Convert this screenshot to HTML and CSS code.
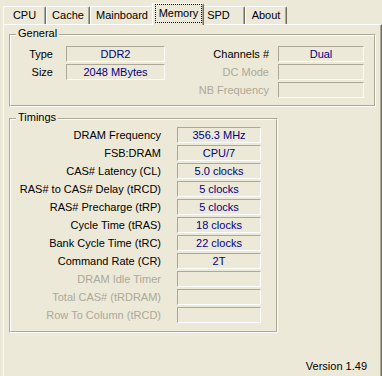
FILE: index.html
```html
<!DOCTYPE html>
<html lang="en">
<head>
    <meta charset="UTF-8">
    <title>CPU-Z Memory</title>
    <link rel="stylesheet" href="styles.css">
</head>
<body>
    <div class="tabs">
        <div class="tab tab-cpu">CPU</div>
        <div class="tab tab-cache">Cache</div>
        <div class="tab tab-mainboard">Mainboard</div>
        <div class="tab tab-memory active"><span class="focus">Memory</span></div>
        <div class="tab tab-spd">SPD</div>
        <div class="tab tab-about">About</div>
    </div>

    <div class="panel">
        <div class="group group-general">
            <div class="group-inner">
                <span class="group-title">General</span>
                <div class="general-cols">
                    <div class="col col-left">
                        <div class="field">
                            <span class="label">Type</span>
                            <span class="value">DDR2</span>
                        </div>
                        <div class="field">
                            <span class="label">Size</span>
                            <span class="value">2048 MBytes</span>
                        </div>
                    </div>
                    <div class="col col-right">
                        <div class="field">
                            <span class="label">Channels #</span>
                            <span class="value">Dual</span>
                        </div>
                        <div class="field">
                            <span class="label disabled">DC Mode</span>
                            <span class="value"></span>
                        </div>
                        <div class="field">
                            <span class="label disabled">NB Frequency</span>
                            <span class="value"></span>
                        </div>
                    </div>
                </div>
            </div>
        </div>

        <div class="group group-timings">
            <div class="group-inner">
                <span class="group-title">Timings</span>
                <div class="field">
                    <span class="label">DRAM Frequency</span>
                    <span class="value">356.3 MHz</span>
                </div>
                <div class="field">
                    <span class="label">FSB:DRAM</span>
                    <span class="value">CPU/7</span>
                </div>
                <div class="field">
                    <span class="label">CAS# Latency (CL)</span>
                    <span class="value">5.0 clocks</span>
                </div>
                <div class="field">
                    <span class="label">RAS# to CAS# Delay (tRCD)</span>
                    <span class="value">5 clocks</span>
                </div>
                <div class="field">
                    <span class="label">RAS# Precharge (tRP)</span>
                    <span class="value">5 clocks</span>
                </div>
                <div class="field">
                    <span class="label">Cycle Time (tRAS)</span>
                    <span class="value">18 clocks</span>
                </div>
                <div class="field">
                    <span class="label">Bank Cycle Time (tRC)</span>
                    <span class="value">22 clocks</span>
                </div>
                <div class="field">
                    <span class="label">Command Rate (CR)</span>
                    <span class="value">2T</span>
                </div>
                <div class="field">
                    <span class="label disabled">DRAM Idle Timer</span>
                    <span class="value"></span>
                </div>
                <div class="field">
                    <span class="label disabled">Total CAS# (tRDRAM)</span>
                    <span class="value"></span>
                </div>
                <div class="field">
                    <span class="label disabled">Row To Column (tRCD)</span>
                    <span class="value"></span>
                </div>
            </div>
        </div>

        <div class="version">Version 1.49</div>
    </div>
</body>
</html>
```

FILE: styles.css
```css
* {
    margin: 0;
    padding: 0;
    box-sizing: border-box;
}

body {
    width: 382px;
    height: 376px;
    overflow: hidden;
    background: #ece9d8;
    color: #000;
    font-family: 'Liberation Sans', Arial, sans-serif;
    font-size: 11px;
}

/* tab strip */
.tabs {
    display: flex;
    align-items: flex-end;
    height: 24px;
    padding-left: 3px;
}

.tab {
    height: 18px;
    border: 1px solid #fff;
    border-bottom: none;
    border-right-color: #716f64;
    border-radius: 2px 2px 0 0;
    box-shadow: inset -1px 0 #aca899;
    background: #ece9d8;
    text-align: center;
    line-height: 16px;
    white-space: nowrap;
}

.tab-cpu { width: 43px; }
.tab-cache { width: 44px; }
.tab-mainboard { width: 64px; }
.tab-memory { width: 48px; }
.tab-spd { width: 43px; padding-right: 10px; }
.tab-about { width: 42px; }

.tab.active {
    position: relative;
    z-index: 1;
    width: 52px;
    height: 22px;
    margin: 0 -2px -1px;
}

.tab.active .focus {
    display: block;
    height: 19px;
    margin: 0 1px 0 2px;
    border: 1px dotted #000;
    line-height: 17px;
}

/* page */
.panel {
    width: 379px;
    height: 370px;
    margin-left: 3px;
    padding-left: 5px;
    border-left: 1px solid #fff;
    border-top: 1px solid #fff;
    border-right: 1px solid #716f64;
    box-shadow: inset -1px 0 #aca899;
}

/* etched group boxes */
.group {
    border: 1px solid;
    border-color: #aca899 #fff #fff #aca899;
}

.group-inner {
    position: relative;
    border: 1px solid;
    border-color: #fff #aca899 #aca899 #fff;
}

.group-title {
    position: absolute;
    top: -9px;
    left: 5px;
    padding: 0 2px;
    background: #ece9d8;
    line-height: 13px;
}

.group-general {
    width: 367px;
    margin-top: 9px;
}

.group-general .group-inner {
    padding: 10px 0 7px;
}

.group-timings {
    width: 269px;
    margin-top: 11px;
}

.group-timings .group-inner {
    padding: 7px 0 8px;
}

/* label + value rows */
.general-cols {
    display: flex;
}

.field {
    display: flex;
    height: 16px;
    margin-bottom: 2px;
}

.field:last-child {
    margin-bottom: 0;
}

.label {
    text-align: right;
    line-height: 16px;
    white-space: nowrap;
}

.label.disabled {
    color: #aca899;
}

.value {
    border: 1px solid;
    border-color: #aca899 #fff #fff #aca899;
    color: #000080;
    text-align: center;
    line-height: 14px;
    white-space: nowrap;
}

.col-left .label { width: 42px; }
.col-left .value { width: 99px; margin-left: 13px; }

.col-right .label { width: 104px; }
.col-right .value { width: 86px; margin-left: 9px; }

.group-timings .label { width: 150px; }
.group-timings .value { width: 84px; margin-left: 16px; }

.version {
    margin-top: 27px;
    padding-right: 14px;
    text-align: right;
    line-height: 13px;
}
```
